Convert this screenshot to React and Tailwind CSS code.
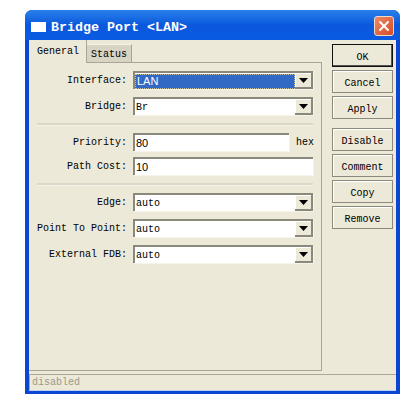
import { X } from "lucide-react";

const mono = "font-['Liberation_Mono',monospace]";

// raised XP style combo arrow
function ComboArrow() {
  return (
    <div className="ml-auto flex h-[16px] w-[18px] shrink-0 items-center justify-center border-r-2 border-b-2 border-[#8b887c] bg-[#ece9d8] shadow-[inset_1px_1px_0_#ffffff]">
      <svg width="9" height="5" viewBox="0 0 9 5">
        <path d="M0 0h9L4.5 5z" fill="#000000" />
      </svg>
    </div>
  );
}

function Field({ label, value, combo, selected, sans, width = "w-[180px]", suffix }) {
  return (
    <div className="flex h-[18px] items-center">
      <div className="w-[98px] shrink-0 pt-px text-right text-[10px] text-black">{label}</div>
      <div className={`ml-[6px] flex h-[18px] ${width} shrink-0 items-center border-t-2 border-l-2 border-t-[#8b887c] border-l-[#8b887c] bg-white shadow-[1px_1px_0_#f6f4ea]`}>
        <div className={`flex h-[15px] flex-1 items-center pl-px ${selected ? "border border-dotted border-[#c8c0a0] bg-[#316ac5] text-white" : "pt-px text-black"} ${sans ? "font-['Liberation_Sans',sans-serif] text-[11px]" : "text-[10px]"}`}>
          {value}
        </div>
        {combo && <ComboArrow />}
      </div>
      {suffix && <div className="ml-[7px] pt-px text-[10px] text-black">{suffix}</div>}
    </div>
  );
}

function Separator() {
  return <div className="ml-[8px] h-[2px] w-[276px] bg-[#dcd8c8] shadow-[0_1px_0_#f6f4ea]" />;
}

function ActionButton({ children, primary }) {
  return (
    <button className={`flex h-[23px] w-[61px] items-center justify-center pt-[4px] text-[10px] text-black ${primary ? "border border-[#111111] shadow-[inset_-1px_-1px_0_#555555]" : "border border-[#8c8a7c] shadow-[inset_1px_1px_0_#ffffff]"}`}>
      {children}
    </button>
  );
}

export default function App() {
  return (
    <div className={`h-[401px] w-[412px] overflow-hidden bg-white pt-[10px] pl-[25px] ${mono}`}>
      <div className="flex h-[384px] w-[375px] flex-col rounded-t-[7px] bg-[#0a46d2]">
        {/* Title bar */}
        <div className="flex h-[30px] shrink-0 items-center rounded-t-[7px] bg-gradient-to-b from-[#2a80ea] via-[#0a58dc] to-[#0a5ae2] pr-[6px] pl-[6px]">
          <div className="mt-[4px] h-[10px] w-[15px] bg-white" />
          <div className="mt-[6px] ml-[5px] text-[13.33px] leading-none font-bold text-white">Bridge Port &lt;LAN&gt;</div>
          <div className="mt-[2px] ml-auto flex h-[20px] w-[20px] items-center justify-center rounded-[3px] border border-[#f2d8c8] bg-gradient-to-br from-[#ee8a68] to-[#d24a20]">
            <X size={16} strokeWidth={2.8} color="#ffffff" />
          </div>
        </div>

        {/* Dialog body */}
        <div className="mx-[4px] mb-[4px] flex min-h-0 flex-1 flex-col bg-[#ece9d8] shadow-[0_1px_0_#bcd0f4]">
          <div className="flex min-h-0 flex-1">
            <div className="flex w-[293px] shrink-0 flex-col">
              {/* Tabs */}
              <div className="flex h-[22px] shrink-0 items-end">
                <div className="relative z-10 -mb-px flex h-[23px] w-[58px] items-start border-r border-[#a8a596] bg-[#ece9d8] pt-[6px] pl-[8px] text-[10px] leading-[12px] text-black">General</div>
                <div className="flex h-[18px] w-[45px] items-center border-t border-r border-t-[#f4f2e8] border-r-[#a8a596] bg-[#d8d4c4] pt-[2px] pl-[4px] text-[10px] text-black">Status</div>
              </div>

              {/* Page */}
              <div className="flex flex-1 flex-col border-t border-r border-b border-[#a8a596] pt-[8px]">
                <Field label="Interface:" value="LAN" combo selected sans />
                <div className="mt-[8px]"><Field label="Bridge:" value="Br" combo /></div>
                <div className="mt-[8px]"><Separator /></div>
                <div className="mt-[8px]">
                  <Field label="Priority:" value="80" sans width="w-[156px]" suffix="hex" />
                </div>
                <div className="mt-[6px]"><Field label="Path Cost:" value="10" sans /></div>
                <div className="mt-[8px]"><Separator /></div>
                <div className="mt-[8px]"><Field label="Edge:" value="auto" combo /></div>
                <div className="mt-[8px]"><Field label="Point To Point:" value="auto" combo /></div>
                <div className="mt-[8px]"><Field label="External FDB:" value="auto" combo /></div>
              </div>
            </div>

            {/* Action buttons */}
            <div className="ml-[10px] flex flex-col pt-[4px]">
              <div className="flex flex-col gap-[3px]">
                <ActionButton primary>OK</ActionButton>
                <ActionButton>Cancel</ActionButton>
                <ActionButton>Apply</ActionButton>
              </div>
              <div className="mt-[9px] flex flex-col gap-[3px]">
                <ActionButton>Disable</ActionButton>
                <ActionButton>Comment</ActionButton>
                <ActionButton>Copy</ActionButton>
                <ActionButton>Remove</ActionButton>
              </div>
            </div>
          </div>

          {/* Status bar */}
          <div className="mt-[3px] flex h-[16px] shrink-0 items-center border-t border-l border-[#aca899] pl-[2px] text-[10px] text-[#9a9888]">disabled</div>
        </div>
      </div>
    </div>
  );
}
